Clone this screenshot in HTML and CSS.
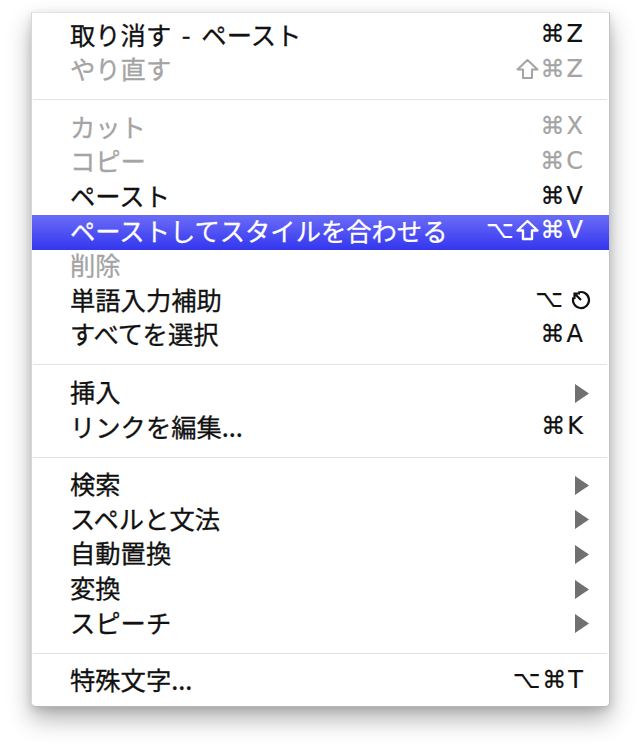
FILE: index.html
```html
<!DOCTYPE html>
<html lang="ja">
<head>
    <meta charset="UTF-8">
    <meta name="viewport" content="width=device-width, initial-scale=1.0">
    <title>編集メニュー</title>
    <link rel="stylesheet" href="styles.css">
</head>
<body>

    <div class="menu">
        <div class="item"><span class="label">取り消す<span class="dash"> - </span>ペースト</span><span class="key"><span class="mod">⌘</span>Z</span></div>
        <div class="item disabled">
            <span class="label">やり直す</span>
            <span class="key"><svg class="shift" width="23" height="22" viewBox="0 0 23 22"><path d="M11.5 2L21.5 11.5H16V20H7V11.5H1.5Z" fill="none" stroke="currentColor" stroke-width="2" stroke-linejoin="round"/></svg><span class="mod">⌘</span>Z</span>
        </div>

        <div class="sep"></div>

        <div class="item disabled"><span class="label">カット</span><span class="key"><span class="mod">⌘</span>X</span></div>
        <div class="item disabled"><span class="label">コピー</span><span class="key"><span class="mod">⌘</span>C</span></div>
        <div class="item"><span class="label">ペースト</span><span class="key"><span class="mod">⌘</span>V</span></div>
        <div class="item selected">
            <span class="label">ペーストしてスタイルを合わせる</span>
            <span class="key"><span class="mod">⌥</span><svg class="shift" width="23" height="22" viewBox="0 0 23 22"><path d="M11.5 2L21.5 11.5H16V20H7V11.5H1.5Z" fill="none" stroke="currentColor" stroke-width="2.4" stroke-linejoin="round"/></svg><span class="mod">⌘</span>V</span>
        </div>
        <div class="item disabled"><span class="label">削除</span></div>
        <div class="item">
            <span class="label">単語入力補助</span>
            <span class="key key-esc"><span class="mod">⌥</span><svg class="esc" width="22" height="22" viewBox="0 0 22 22"><path d="M9.3 4.5A8 8 0 1 1 4.5 9.3" fill="none" stroke="#111" stroke-width="2.2"/><path d="M12 12L5.5 5.5M5.5 11V5.5H11" fill="none" stroke="#111" stroke-width="2.2"/></svg></span>
        </div>
        <div class="item"><span class="label">すべてを選択</span><span class="key"><span class="mod">⌘</span>A</span></div>

        <div class="sep"></div>

        <div class="item"><span class="label">挿入</span><span class="arrow"><svg width="14" height="19" viewBox="0 0 14 19"><polygon points="0,0 14,9.5 0,19" fill="#707070"/></svg></span></div>
        <div class="item"><span class="label">リンクを編集...</span><span class="key"><span class="mod">⌘</span>K</span></div>

        <div class="sep"></div>

        <div class="item"><span class="label">検索</span><span class="arrow"><svg width="14" height="19" viewBox="0 0 14 19"><polygon points="0,0 14,9.5 0,19" fill="#707070"/></svg></span></div>
        <div class="item"><span class="label">スペルと文法</span><span class="arrow"><svg width="14" height="19" viewBox="0 0 14 19"><polygon points="0,0 14,9.5 0,19" fill="#707070"/></svg></span></div>
        <div class="item"><span class="label">自動置換</span><span class="arrow"><svg width="14" height="19" viewBox="0 0 14 19"><polygon points="0,0 14,9.5 0,19" fill="#707070"/></svg></span></div>
        <div class="item"><span class="label">変換</span><span class="arrow"><svg width="14" height="19" viewBox="0 0 14 19"><polygon points="0,0 14,9.5 0,19" fill="#707070"/></svg></span></div>
        <div class="item"><span class="label">スピーチ</span><span class="arrow"><svg width="14" height="19" viewBox="0 0 14 19"><polygon points="0,0 14,9.5 0,19" fill="#707070"/></svg></span></div>

        <div class="sep"></div>

        <div class="item"><span class="label">特殊文字...</span><span class="key"><span class="mod">⌥</span><span class="mod">⌘</span>T</span></div>
    </div>

</body>
</html>
```

FILE: styles.css
```css
body {
    margin: 0;
    padding: 0 0 60px;
    background: #fff;
    font-family: "Noto Sans CJK JP", "DejaVu Sans", sans-serif;
}

.menu {
    margin: 12px 0 0 31px;
    width: 579px;
    box-sizing: border-box;
    padding: 6px 0 7px;
    background: #fff;
    border: 1px solid #d8d8d8;
    border-top-color: #e4e4e4;
    border-right-color: #c4c4c4;
    border-bottom-color: #b8b8b8;
    border-radius: 0 0 5px 5px;
    box-shadow: 0 12px 24px rgba(0, 0, 0, 0.3), 0 3px 8px rgba(0, 0, 0, 0.12);
}

.item {
    height: 34.6px;
    box-sizing: border-box;
    display: flex;
    align-items: center;
    justify-content: space-between;
    padding: 0 26px 4px 38px;
    color: #111;
    font-size: 25.3px;
    line-height: 1;
    -webkit-text-stroke: 0.3px currentColor;
}

.label {
    white-space: nowrap;
}

.dash {
    margin: 0 5px;
}

.key {
    font-family: "DejaVu Sans", sans-serif;
    font-size: 24px;
    display: flex;
    align-items: center;
    gap: 2px;
    -webkit-text-stroke: 0.2px currentColor;
}

.mod {
    font-size: 24px;
}

.key-esc {
    margin-right: -8px;
}

.esc {
    margin-left: 4px;
}

.arrow {
    display: flex;
    margin-right: -6px;
    padding-top: 3px;
}

.disabled {
    color: #a4a4a4;
}

.selected {
    color: #fff;
    background: linear-gradient(to bottom, #6a6cf7, #3436ef);
}

.sep {
    height: 23px;
    display: flex;
    align-items: center;
    padding: 0 2px 0 1px;
}

.sep::before {
    content: "";
    flex: 1;
    height: 1px;
    background: #e2e2e2;
}
```
